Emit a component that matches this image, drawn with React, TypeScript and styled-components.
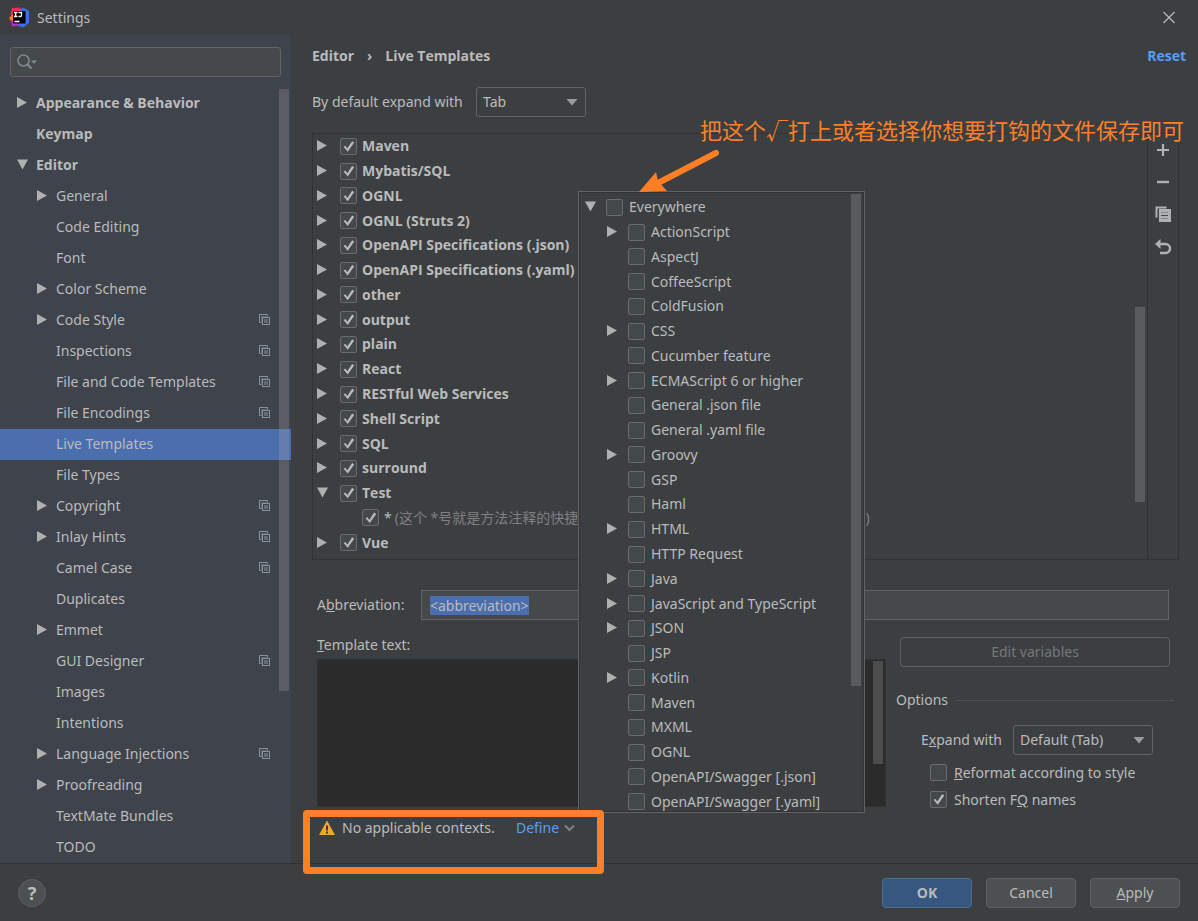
import React, { useEffect, useRef } from "react";
import styled, { createGlobalStyle, css } from "styled-components";

const bold = css`
  font-family: "Open Sans", sans-serif;
  font-weight: 700;
`;

const Global = createGlobalStyle`
  * { box-sizing: border-box; }
  body {
    margin: 0;
    background: #3c3f41;
    color: #bbbbbb;
    font: 14px/20px "Noto Sans", "Noto Sans CJK SC", sans-serif;
  }
  button, input, select, textarea { font: inherit; color: inherit; margin: 0; }
`;

const Window = styled.div`
  position: relative;
  display: grid;
  grid-template-rows: 35px 1fr 58px;
  min-height: 100vh;
  overflow: hidden;
`;

const TitleBar = styled.header`
  display: flex;
  align-items: center;
  gap: 7px;
  padding: 0 22px 0 9px;
`;

const Title = styled.h1`
  flex: 1;
  margin: 0;
  font-size: 14px;
  font-weight: 400;
`;

const PlainButton = styled.button`
  display: flex;
  align-items: center;
  justify-content: center;
  padding: 0;
  border: 0;
  background: none;
`;

const Body = styled.div`
  display: flex;
`;

const Sidebar = styled.aside`
  position: relative;
  width: 291px;
  flex: none;
  background: #3e434c;
`;

const SearchBox = styled.label`
  display: flex;
  align-items: center;
  height: 30px;
  margin: 12px 10px 11px;
  padding: 0 6px;
  border: 1px solid #646464;
  border-radius: 3px;
  background: #45494a;
`;

const SearchInput = styled.input`
  flex: 1;
  min-width: 0;
  border: 0;
  outline: 0;
  background: none;
`;

const NavItem = styled.button<{ $level: number; $bold?: boolean; $active?: boolean }>`
  display: flex;
  align-items: center;
  width: 100%;
  height: 31px;
  padding: 0 21px 2px ${(p) => 16 + p.$level * 20}px;
  border: 0;
  text-align: left;
  white-space: nowrap;
  ${(p) => p.$bold && bold}
  background: ${(p) => (p.$active ? "#4b6eaf" : "transparent")};
`;

const NavText = styled.span`
  flex: 1;
`;

const Slot = styled.span<{ $width: number }>`
  display: flex;
  flex: none;
  width: ${(p) => p.$width}px;
`;

const Thumb = styled.div<{ $top: number; $right: number; $height: number }>`
  position: absolute;
  top: ${(p) => p.$top}px;
  right: ${(p) => p.$right}px;
  width: 10px;
  height: ${(p) => p.$height}px;
  background: rgba(166, 166, 166, 0.28);
`;

const Content = styled.main`
  position: relative;
  flex: 1;
  min-width: 0;
  padding: 0 12px 0 21px;
`;

const Heading = styled.div`
  display: flex;
  align-items: center;
  height: 42px;
  ${bold}
`;

const Crumb = styled.span`
  display: flex;
  flex: 1;
  gap: 13px;
`;

const Link = styled.a<{ $bold?: boolean }>`
  display: flex;
  align-items: center;
  gap: 5px;
  color: #589df6;
  text-decoration: none;
  ${(p) => p.$bold && bold}
`;

const ExpandRow = styled.div`
  display: flex;
  align-items: center;
  padding: 10px 0 16px;
  > label { width: 164px; }
`;

const SelectWrap = styled.span<{ $width: number }>`
  display: grid;
  align-items: center;
  width: ${(p) => p.$width}px;
  height: 30px;
  > * { grid-area: 1 / 1; }
  > svg { justify-self: end; margin-right: 8px; pointer-events: none; }
`;

const Select = styled.select`
  appearance: none;
  width: 100%;
  height: 30px;
  padding: 0 26px 0 6px;
  border: 1px solid #646464;
  border-radius: 3px;
  background: #3c3f41;
`;

const Panel = styled.section`
  position: relative;
  display: flex;
  margin-right: 7px;
  border: 1px solid #323232;
`;

const Rows = styled.ul<{ $height: number }>`
  flex: 1;
  display: grid;
  grid-auto-rows: 1fr;
  height: ${(p) => p.$height}px;
  margin: 0 0 4px;
  padding: 0 0 0 3px;
  list-style: none;
`;

const Row = styled.li<{ $level?: number; $bold?: boolean }>`
  display: flex;
  align-items: center;
  min-height: 0;
  padding-left: ${(p) => (p.$level ? 22 : 0)}px;
  white-space: nowrap;
  ${(p) => p.$bold && bold}
`;

const CheckLabel = styled.label<{ $gap?: number }>`
  display: flex;
  align-items: center;
  gap: ${(p) => p.$gap ?? 5}px;
`;

const Check = styled.input.attrs({ type: "checkbox" })`
  appearance: none;
  flex: none;
  width: 17px;
  height: 17px;
  border: 1px solid #6b6b6b;
  border-radius: 2px;
  background: #43494a;
  &:checked::after {
    content: "";
    display: block;
    width: 15px;
    height: 15px;
    background: #bbbbbb;
    clip-path: polygon(17% 52%, 30% 46%, 42% 64%, 74% 15%, 88% 24%, 45% 85%);
  }
`;

const Entry = styled.span`
  display: flex;
  gap: 3px;
`;

const Description = styled.span`
  display: flex;
  justify-content: space-between;
  width: 475px;
  color: #808080;
`;

const Toolbar = styled.div`
  display: flex;
  flex-direction: column;
  width: 31px;
  border-left: 1px solid #323232;
  > button { height: 32px; }
`;

const Form = styled.form`
  padding: 30px 12px 0 5px;
`;

const AbbreviationRow = styled.div`
  display: flex;
  align-items: center;
  margin-right: 5px;
  > label { width: 104px; }
`;

const AbbreviationInput = styled.input`
  flex: 1;
  min-width: 0;
  height: 30px;
  padding: 0 8px;
  border: 1px solid #646464;
  outline: 0;
  background: #45494a;
  &::selection { background: #4b6eaf; color: #bbbbbb; }
`;

const Columns = styled.div`
  display: grid;
  grid-template-columns: 1fr 278px;
  gap: 10px;
`;

const TemplateLabel = styled.label`
  display: block;
  padding: 15px 0 4px;
`;

const EditorFrame = styled.div`
  position: relative;
`;

const Editor = styled.textarea`
  display: block;
  width: 100%;
  height: 148px;
  border: 1px solid #323232;
  outline: 0;
  resize: none;
  background: #2b2b2b;
`;

const Warning = styled.div`
  display: flex;
  align-items: center;
  gap: 7px;
  margin-top: 11px;
  > span { width: 167px; }
`;

const OptionColumn = styled.div`
  padding-top: 17px;
`;

const button = css`
  height: 30px;
  border: 1px solid #5e6060;
  border-radius: 4px;
`;

const EditButton = styled.button`
  ${button}
  display: block;
  width: 270px;
  margin: 0 4px;
  color: #777777;
  background: #3c3f41;
`;

const OptionsTitle = styled.h2`
  display: flex;
  align-items: center;
  gap: 8px;
  margin: 23px 0 15px;
  font-size: 14px;
  font-weight: 400;
  &::after {
    content: "";
    flex: 1;
    height: 1px;
    background: #515151;
  }
`;

const OptionRow = styled.div<{ $indent: number; $height: number }>`
  display: flex;
  align-items: center;
  height: ${(p) => p.$height}px;
  padding-left: ${(p) => p.$indent}px;
`;

const ExpandLabel = styled.label`
  width: 92px;
`;

const OptionChecks = styled.div`
  margin-top: 4px;
`;

const Popup = styled.section`
  position: absolute;
  left: 287px;
  top: 156px;
  width: 287px;
  height: 622px;
  overflow: hidden;
  padding: 3px 2px;
  border: 1px solid #616365;
  box-shadow: inset 0 0 0 1px #313335;
  background: #3c3f41;
`;

const Footer = styled.footer`
  display: flex;
  align-items: center;
  gap: 14px;
  padding: 0 18px;
  border-top: 1px solid #2f3233;
`;

const HelpButton = styled.button`
  width: 28px;
  height: 28px;
  margin-right: auto;
  padding: 0;
  border: 1px solid #5e6060;
  border-radius: 50%;
  background: #4c5052;
  font-size: 18px;
  font-weight: 700;
`;

const DialogButton = styled.button<{ $primary?: boolean }>`
  ${button}
  width: 90px;
  background: ${(p) => (p.$primary ? "#365880" : "#4c5052")};
  border-color: ${(p) => (p.$primary ? "#4c708c" : "#5e6060")};
  ${(p) => p.$primary && bold}
`;

const Note = styled.p`
  position: absolute;
  top: 112px;
  right: 14px;
  margin: 0;
  color: #ff7f27;
  font: 22px/34px "Noto Sans CJK SC", sans-serif;
`;

const Arrow = styled.svg`
  position: absolute;
  left: 636px;
  top: 146px;
`;

const Highlight = styled.div`
  position: absolute;
  left: 303px;
  top: 810px;
  width: 301px;
  height: 64px;
  border: 7px solid #ff7f27;
  border-radius: 4px;
`;

const Triangle = ({ open }: { open?: boolean }) => (
  <svg width="12" height="12" viewBox="0 0 12 12" fill="#b0b0b0" aria-hidden="true">
    <path d={open ? "M1 0.500h11L6.500 10.500z" : "M1 0v11L11 5.500z"} />
  </svg>
);

const DropArrow = () => (
  <svg width="12" height="7" viewBox="0 0 12 7" fill="#9a9da0" aria-hidden="true">
    <path d="M0.500 0h11L6 6.500z" />
  </svg>
);

const CopyMark = () => (
  <svg width="11" height="11" viewBox="0 0 11 11" fill="none" stroke="#87939a" aria-hidden="true">
    <path d="M2.500 8.500h-2v-8h8v2" />
    <path d="M2.500 8.500v-6h6" stroke="#5f6871" />
    <rect x="3.500" y="3.500" width="7" height="7" />
    <path d="M5 6h4M5 8h4" />
  </svg>
);

const Logo = () => (
  <svg width="21" height="21" viewBox="0 0 21 21" aria-hidden="true">
    <path d="M1.500 8L3 1l8-0.500 3 4-8 8z" fill="#fe2857" />
    <path d="M0 11l4-4 2 8-4-1z" fill="#fc801d" />
    <path d="M11 3l3-2.500 6 3.500v12l-6 4.500-6-2 4-6z" fill="#3b6fe8" />
    <path d="M2 13l5 1 4 4-8 1.500z" fill="#b531c8" />
    <path d="M4 4h12.500v12.500H4z" fill="#000" />
    <path d="M5 5.500h3.500M6.700 5.500v4M5 9.500h3.500M9.500 5.500h3v3q0 1-1 1H9.500M5.500 14.500h5" stroke="#fff" strokeWidth="1.300" fill="none" />
  </svg>
);

type NavEntry = { text: string; level: number; open?: boolean; leaf?: boolean; copy?: boolean };
const nav: NavEntry[] = [
  { text: "Appearance & Behavior", level: 0 },
  { text: "Keymap", level: 0, leaf: true },
  { text: "Editor", level: 0, open: true },
  { text: "General", level: 1 },
  { text: "Code Editing", level: 1, leaf: true },
  { text: "Font", level: 1, leaf: true },
  { text: "Color Scheme", level: 1 },
  { text: "Code Style", level: 1, copy: true },
  { text: "Inspections", level: 1, leaf: true, copy: true },
  { text: "File and Code Templates", level: 1, leaf: true, copy: true },
  { text: "File Encodings", level: 1, leaf: true, copy: true },
  { text: "Live Templates", level: 1, leaf: true },
  { text: "File Types", level: 1, leaf: true },
  { text: "Copyright", level: 1, copy: true },
  { text: "Inlay Hints", level: 1, copy: true },
  { text: "Camel Case", level: 1, leaf: true, copy: true },
  { text: "Duplicates", level: 1, leaf: true },
  { text: "Emmet", level: 1 },
  { text: "GUI Designer", level: 1, leaf: true, copy: true },
  { text: "Images", level: 1, leaf: true },
  { text: "Intentions", level: 1, leaf: true },
  { text: "Language Injections", level: 1, copy: true },
  { text: "Proofreading", level: 1 },
  { text: "TextMate Bundles", level: 1, leaf: true },
  { text: "TODO", level: 1, leaf: true },
];

const groups = [
  "Maven", "Mybatis/SQL", "OGNL", "OGNL (Struts 2)", "OpenAPI Specifications (.json)",
  "OpenAPI Specifications (.yaml)", "other", "output", "plain", "React",
  "RESTful Web Services", "Shell Script", "SQL", "surround", "Test", "*", "Vue",
];

const contexts = [
  "Everywhere", "ActionScript", "AspectJ", "CoffeeScript", "ColdFusion", "CSS",
  "Cucumber feature", "ECMAScript 6 or higher", "General .json file", "General .yaml file",
  "Groovy", "GSP", "Haml", "HTML", "HTTP Request", "Java", "JavaScript and TypeScript",
  "JSON", "JSP", "Kotlin", "Maven", "MXML", "OGNL", "OpenAPI/Swagger [.json]",
  "OpenAPI/Swagger [.yaml]",
];
const expandable = new Set([
  "Everywhere", "ActionScript", "CSS", "ECMAScript 6 or higher", "Groovy", "HTML", "Java",
  "JavaScript and TypeScript", "JSON", "Kotlin",
]);

export default function App() {
  const abbreviation = useRef<HTMLInputElement>(null);
  useEffect(() => {
    abbreviation.current?.focus();
    abbreviation.current?.select();
  }, []);

  return (
    <>
      <Global />
      <Window>
        <TitleBar>
          <Logo />
          <Title>Settings</Title>
          <PlainButton aria-label="Close">
            <svg width="14" height="14" viewBox="0 0 14 14" stroke="#bbbbbb" strokeWidth="1.200">
              <path d="M1.500 1l11 11M12.500 1l-11 11" />
            </svg>
          </PlainButton>
        </TitleBar>

        <Body>
          <Sidebar>
            <SearchBox>
              <svg width="22" height="18" viewBox="0 0 22 18" fill="none" stroke="#7f8b91" strokeWidth="1.500" aria-hidden="true">
                <circle cx="6.500" cy="7.500" r="5.500" />
                <path d="M10.500 11.500l4 4" strokeWidth="2" />
                <path d="M14 7.500h6l-3 3.500z" fill="#7f8b91" stroke="none" />
              </svg>
              <SearchInput aria-label="Search settings" />
            </SearchBox>
            <nav>
              {nav.map((n) => (
                <NavItem key={n.text} $level={n.level} $bold={n.level === 0} $active={n.text === "Live Templates"}>
                  <Slot $width={20}>{!n.leaf && <Triangle open={n.open} />}</Slot>
                  <NavText>{n.text}</NavText>
                  {n.copy && <CopyMark />}
                </NavItem>
              ))}
            </nav>
            <Thumb $top={54} $right={2} $height={602} />
          </Sidebar>

          <Content>
            <Heading>
              <Crumb>
                <span>Editor</span>
                <span>›</span>
                <span>Live Templates</span>
              </Crumb>
              <Link href="#reset" $bold>Reset</Link>
            </Heading>
            <ExpandRow>
              <label htmlFor="default-expand">By default expand with</label>
              <SelectWrap $width={110}>
                <Select id="default-expand"><option>Tab</option></Select>
                <DropArrow />
              </SelectWrap>
            </ExpandRow>

            <Panel>
              <Rows $height={421}>
                {groups.map((g) =>
                  g === "*" ? (
                    <Row key={g} $level={1}>
                      <Slot $width={24} />
                      <CheckLabel>
                        <Check defaultChecked />
                        <Entry>
                          <span>*</span>
                          <Description>
                            <span>(这个 *号就是方法注释的快捷键</span>
                            <span>)</span>
                          </Description>
                        </Entry>
                      </CheckLabel>
                    </Row>
                  ) : (
                    <Row key={g} $bold>
                      <Slot $width={24}><Triangle open={g === "Test"} /></Slot>
                      <CheckLabel>
                        <Check defaultChecked />
                        <span>{g}</span>
                      </CheckLabel>
                    </Row>
                  )
                )}
              </Rows>
              <Toolbar>
                <PlainButton aria-label="Add">
                  <svg width="16" height="16" viewBox="0 0 16 16" stroke="#afb1b3" strokeWidth="2.200"><path d="M2 8h12M8 2v12" /></svg>
                </PlainButton>
                <PlainButton aria-label="Remove">
                  <svg width="16" height="16" viewBox="0 0 16 16" stroke="#afb1b3" strokeWidth="2.400"><path d="M2 8h12" /></svg>
                </PlainButton>
                <PlainButton aria-label="Duplicate">
                  <svg width="16" height="16" viewBox="0 0 16 16">
                    <path d="M0.500 0.500h11v2h-9v9h-2z" fill="#afb1b3" />
                    <path d="M4 3h12v13H4z" fill="#afb1b3" />
                    <path d="M6 6.500h7M6 12.500h7" stroke="#85888a" />
                    <path d="M6 9.500h7" stroke="#4a4d4f" />
                  </svg>
                </PlainButton>
                <PlainButton aria-label="Restore">
                  <svg width="18" height="18" viewBox="0 0 18 18">
                    <path d="M5 7h6.500a4.500 4.500 0 0 1 0 9H6" fill="none" stroke="#afb1b3" strokeWidth="2.400" />
                    <path d="M6.500 2v10L1 7z" fill="#afb1b3" />
                  </svg>
                </PlainButton>
              </Toolbar>
              <Thumb $top={173} $right={33} $height={195} />
            </Panel>

            <Form onSubmit={(e) => e.preventDefault()}>
              <AbbreviationRow>
                <label htmlFor="abbreviation">A<u>b</u>breviation:</label>
                <AbbreviationInput id="abbreviation" ref={abbreviation} defaultValue="<abbreviation>" />
              </AbbreviationRow>
              <Columns>
                <div>
                  <TemplateLabel htmlFor="template"><u>T</u>emplate text:</TemplateLabel>
                  <EditorFrame>
                    <Editor id="template" />
                    <Thumb $top={2} $right={3} $height={103} />
                  </EditorFrame>
                  <Warning>
                    <svg width="18" height="16" viewBox="0 0 18 16" aria-hidden="true">
                      <path d="M10 0.500l8 14.500H2z" fill="#f0a732" />
                      <path d="M9 5.500h2v5H9zM9 11.500h2v2H9z" fill="#3c3f41" />
                    </svg>
                    <span>No applicable contexts.</span>
                    <Link href="#define">
                      Define
                      <svg width="11" height="8" viewBox="0 0 11 8" fill="none" stroke="#7f8385" strokeWidth="2">
                        <path d="M1 1.500l4.500 4.500L10 1.500" />
                      </svg>
                    </Link>
                  </Warning>
                </div>
                <OptionColumn>
                  <EditButton type="button" disabled>Edit variables</EditButton>
                  <OptionsTitle>Options</OptionsTitle>
                  <OptionRow $indent={25} $height={30}>
                    <ExpandLabel htmlFor="expand">E<u>x</u>pand with</ExpandLabel>
                    <SelectWrap $width={140}>
                      <Select id="expand"><option>Default (Tab)</option></Select>
                      <DropArrow />
                    </SelectWrap>
                  </OptionRow>
                  <OptionChecks>
                    <OptionRow $indent={34} $height={27}>
                      <CheckLabel $gap={7}><Check /><span><u>R</u>eformat according to style</span></CheckLabel>
                    </OptionRow>
                    <OptionRow $indent={34} $height={27}>
                      <CheckLabel $gap={7}><Check defaultChecked /><span>Shorten F<u>Q</u> names</span></CheckLabel>
                    </OptionRow>
                  </OptionChecks>
                </OptionColumn>
              </Columns>
            </Form>

            <Popup aria-label="Contexts">
              <Rows $height={619}>
                {contexts.map((c, i) => (
                  <Row key={c} $level={i ? 1 : 0}>
                    <Slot $width={22}>{expandable.has(c) && <Triangle open={i === 0} />}</Slot>
                    <CheckLabel $gap={6}><Check /><span>{c}</span></CheckLabel>
                  </Row>
                ))}
              </Rows>
              <Thumb $top={2} $right={3} $height={492} />
            </Popup>
          </Content>
        </Body>

        <Footer>
          <HelpButton aria-label="Help">?</HelpButton>
          <DialogButton $primary>OK</DialogButton>
          <DialogButton>Cancel</DialogButton>
          <DialogButton><u>A</u>pply</DialogButton>
        </Footer>

        <Note>把这个√打上或者选择你想要打钩的文件保存即可</Note>
        <Arrow width="86" height="50" viewBox="0 0 86 50" aria-hidden="true">
          <path d="M80 7L22 37" stroke="#ff7f27" strokeWidth="6" strokeLinecap="round" />
          <path d="M3 46L20 26l2 9 9 10z" fill="#ff7f27" />
        </Arrow>
        <Highlight />
      </Window>
    </>
  );
}
